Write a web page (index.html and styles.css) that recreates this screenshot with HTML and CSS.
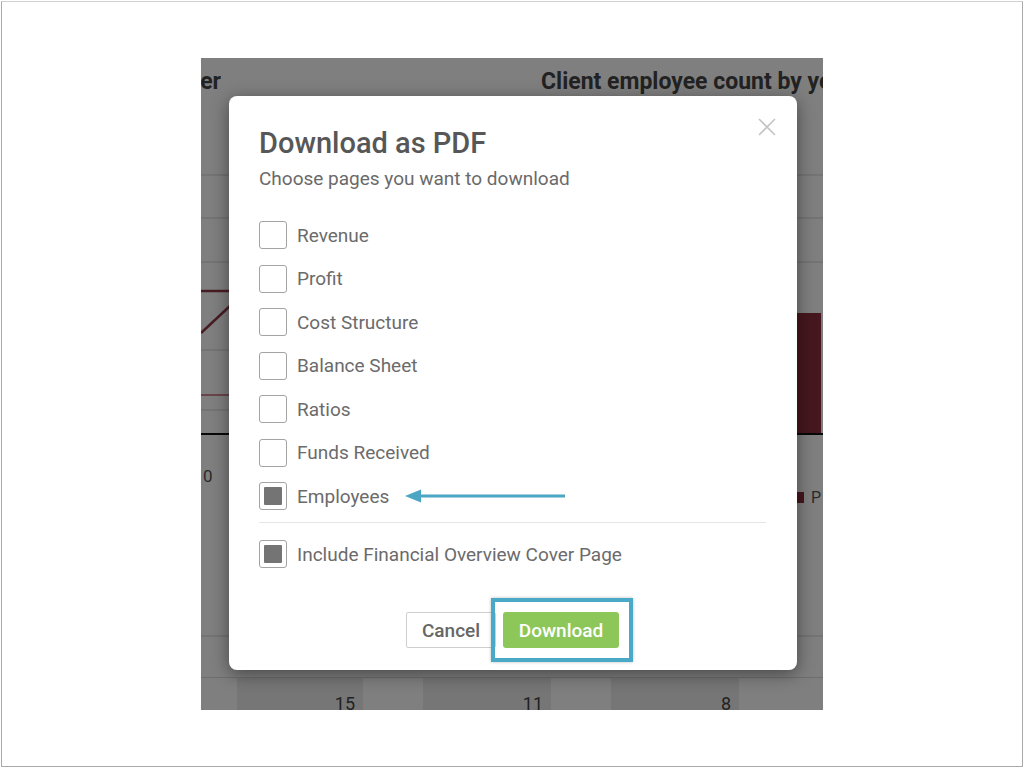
FILE: index.html
```html
<!DOCTYPE html>
<html lang="en">
<head>
<meta charset="utf-8">
<title>Download as PDF</title>
<link rel="stylesheet" href="styles.css">
</head>
<body>
<div class="frame">
  <div class="screen">
    <div class="dashboard">
      <div class="dash-head">
        <div class="dash-title left"><span>Revenue per customer</span></div>
        <div class="dash-title right">Client employee count by year</div>
      </div>
      <svg class="charts" width="622" height="575" viewBox="0 0 622 575">
        <g stroke="#e2e2e2" stroke-width="1.5">
          <line x1="0" y1="73" x2="622" y2="73"/>
          <line x1="0" y1="116" x2="622" y2="116"/>
          <line x1="0" y1="160" x2="622" y2="160"/>
          <line x1="0" y1="248" x2="40" y2="248"/>
          <line x1="0" y1="308" x2="40" y2="308"/>
          <line x1="0" y1="534" x2="622" y2="534"/>
        </g>
        <line x1="0" y1="189" x2="40" y2="189" stroke="#8e3a46" stroke-width="2.5"/>
        <line x1="0" y1="231" x2="30" y2="203" stroke="#8e3a46" stroke-width="2.5"/>
        <line x1="0" y1="293" x2="40" y2="293" stroke="#d08a95" stroke-width="2"/>
        <line x1="0" y1="332" x2="40" y2="332" stroke="#111" stroke-width="2"/>
        <rect x="596" y="211" width="24" height="121" fill="#8c2f3c"/>
        <line x1="560" y1="332" x2="622" y2="332" stroke="#111" stroke-width="2"/>
        <text x="2" y="380" font-family="Roboto, sans-serif" font-size="17" fill="#555">0</text>
        <rect x="596" y="390" width="7" height="11" fill="#8c2f3c"/>
        <text x="610" y="401" font-family="Roboto, sans-serif" font-size="16" fill="#555">P</text>
      </svg>
      <div class="dash-table">
        <div class="cell"></div>
        <div class="cell dark">15</div>
        <div class="cell"></div>
        <div class="cell dark">11</div>
        <div class="cell"></div>
        <div class="cell dark">8</div>
        <div class="cell"></div>
      </div>
    </div>

    <div class="overlay">
      <div class="modal">
        <button class="close" aria-label="Close">
          <svg width="18" height="18" viewBox="0 0 18 18"><path d="M1 1 L17 17 M17 1 L1 17" stroke="#c4c4c4" stroke-width="1.6" fill="none"/></svg>
        </button>
        <h1 class="modal-title">Download as PDF</h1>
        <p class="modal-sub">Choose pages you want to download</p>

        <ul class="options">
          <li class="option"><span class="box"></span><span class="label">Revenue</span></li>
          <li class="option"><span class="box"></span><span class="label">Profit</span></li>
          <li class="option"><span class="box"></span><span class="label">Cost Structure</span></li>
          <li class="option"><span class="box"></span><span class="label">Balance Sheet</span></li>
          <li class="option"><span class="box"></span><span class="label">Ratios</span></li>
          <li class="option"><span class="box"></span><span class="label">Funds Received</span></li>
          <li class="option"><span class="box checked"></span><span class="label">Employees</span>
            <svg class="arrow" width="160" height="16" viewBox="0 0 160 16"><polygon points="0,8 16,1.5 16,14.5" fill="#4ba6c3"/><rect x="14" y="6.5" width="146" height="3" fill="#4ba6c3"/></svg>
          </li>
        </ul>
        <hr class="divider">
        <div class="option cover"><span class="box checked"></span><span class="label">Include Financial Overview Cover Page</span></div>

        <div class="actions">
          <button class="btn cancel">Cancel</button>
          <span class="highlight"><button class="btn download">Download</button></span>
        </div>
      </div>
    </div>
  </div>
</div>
</body>
</html>
```
FILE: styles.css
```css
* { box-sizing: border-box; }
html, body { margin: 0; padding: 0; background: #fff; }
body { font-family: Roboto, "Liberation Sans", Arial, sans-serif; }

.frame {
  width: 1022px;
  height: 766px;
  margin: 1px 0 0 1px;
  border: 1px solid #a9a9a9;
  border-top-color: #d0d0d0;
  padding: 56px 0 0 199px;
}

.screen {
  position: relative;
  width: 622px;
  height: 652px;
  overflow: hidden;
  background: #fff;
}

.dashboard {
  display: flex;
  flex-direction: column;
  height: 100%;
}

.dash-head {
  flex: none;
  display: grid;
  grid-template-columns: 20px 1fr;
  height: 44px;
  align-items: center;
  padding-top: 2px;
  font-weight: 700;
  font-size: 23px;
  color: #454545;
  white-space: nowrap;
}
.dash-title.left {
  display: flex;
  justify-content: flex-end;
  overflow: hidden;
}
.dash-title.right {
  padding-left: 320px;
  overflow: hidden;
}

.charts { display: block; flex: none; }

.dash-table {
  display: grid;
  grid-template-columns: 36px 126px 60px 128px 60px 128px 1fr;
  flex: 1;
  min-height: 0;
  overflow: hidden;
  border-top: 1px solid #dcdcdc;
  font-size: 18px;
  color: #444;
}
.cell { padding-top: 16px; text-align: right; padding-right: 8px; line-height: 20px; }
.cell.dark { background: #ededed; }

.overlay {
  position: absolute;
  inset: 0;
  background: rgba(0, 0, 0, 0.5);
  display: flex;
  padding: 38px 26px 40px 28px;
}

.modal {
  position: relative;
  flex: 1;
  background: #fff;
  border-radius: 8px;
  box-shadow: 0 4px 18px rgba(0, 0, 0, 0.45);
  padding: 30px 31px 0 30px;
}

.close {
  position: absolute;
  top: 22px;
  right: 21px;
  width: 18px;
  height: 18px;
  padding: 0;
  border: 0;
  background: none;
}
.close svg { display: block; }

.modal-title {
  margin: 0;
  font-size: 29px;
  line-height: 34px;
  font-weight: 500;
  color: #575757;
}
.modal-sub {
  margin: 7px 0 0;
  font-size: 19px;
  line-height: 24px;
  color: #6a6a6a;
}

.options {
  list-style: none;
  margin: 30px 0 0;
  padding: 0;
  display: flex;
  flex-direction: column;
  gap: 15.5px;
}
.option {
  display: flex;
  align-items: center;
  height: 28px;
}
.box {
  flex: none;
  width: 28px;
  height: 28px;
  border: 1.5px solid #a3a3a3;
  border-radius: 3px;
  background: #fff;
  padding: 4px;
}
.box.checked::before {
  content: "";
  display: block;
  width: 100%;
  height: 100%;
  background: #747474;
  border-radius: 1px;
}
.label {
  margin-left: 10px;
  font-size: 19px;
  color: #6b6b6b;
}
.arrow { margin-left: 16px; flex: none; }

.divider {
  margin: 12px 0 17px;
  border: 0;
  border-top: 1.5px solid #e4e4e4;
}

.actions {
  display: flex;
  justify-content: center;
  gap: 7px;
  margin-top: 44px;
}
.btn {
  height: 36px;
  font-family: inherit;
  font-size: 19px;
  font-weight: 500;
  border-radius: 2px;
  padding: 0;
}
.cancel {
  width: 90px;
  background: #fff;
  border: 1px solid #cfcfcf;
  color: #666;
}
.download {
  display: block;
  width: 116px;
  background: #8dc75a;
  border: 0;
  color: #fff;
  border-radius: 3px;
}
.highlight {
  position: relative;
  display: block;
}
.highlight::after {
  content: "";
  position: absolute;
  top: -14px;
  bottom: -14px;
  left: -12px;
  right: -14px;
  border: 4px solid #4aa9c6;
  box-shadow: 0 0 3px rgba(0,0,0,0.25);
  pointer-events: none;
}
```
